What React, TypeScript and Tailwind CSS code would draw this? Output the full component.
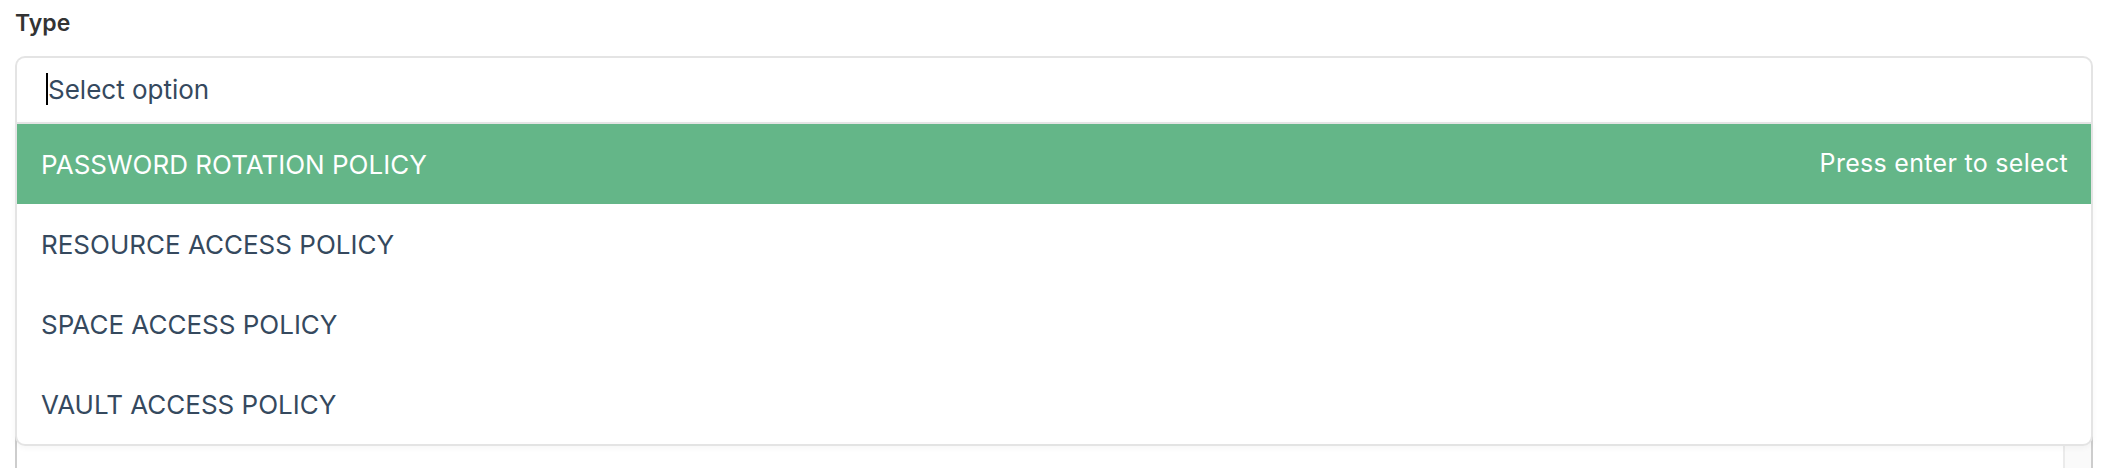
import { useState } from "react";

const options = [
  "PASSWORD ROTATION POLICY",
  "RESOURCE ACCESS POLICY",
  "SPACE ACCESS POLICY",
  "VAULT ACCESS POLICY",
];

function App() {
  const [active, setActive] = useState(0);

  return (
    <div className="h-[468px] w-full bg-white overflow-hidden font-['Inter','Liberation_Sans',sans-serif]">
      <div className="pl-[15px] pr-[17px] pt-[8px]">
        <label className="block text-[23px] font-semibold leading-[30px] text-[#333333]">Type</label>

        {/* select field with open menu */}
        <div className="relative mt-[18px]">
          <div className="h-[66px] flex items-center pl-[29px] pb-[2px] border-2 border-b-0 border-[#e4e4e4] rounded-t-[10px] bg-white">
            <span className="w-[2px] h-[32px] bg-black" />
            <span className="text-[26px] text-[#35495e]">Select option</span>
          </div>

          <ul className="absolute left-0 right-0 top-full z-10 bg-white border-2 border-[#e4e4e4] rounded-b-[10px] shadow-[0_2px_6px_rgba(0,0,0,0.04)]">
            {options.map((opt, i) => (
              <li
                key={opt}
                onMouseEnter={() => setActive(i)}
                className={
                  i === active
                    ? "h-[80px] flex items-center justify-between pl-[24px] pr-[23px] bg-[#64b688] text-white"
                    : "h-[80px] flex items-center justify-between pl-[24px] pr-[23px] text-[#35495e]"
                }
              >
                <span className="text-[26px]">{opt}</span>
                {i === active && <span className="text-[25px] tracking-[0.3px]">Press enter to select</span>}
              </li>
            ))}
          </ul>
        </div>

        {/* field underneath the menu */}
        <div className="mt-[20px] h-[360px] flex border-2 border-[#cdcdcd] rounded-t-[10px] bg-white">
          <div className="flex-1" />
          <div className="w-[28px] bg-[#fafafa] border-l-2 border-[#ebebeb]" />
        </div>
      </div>
    </div>
  );
}

export default App;
